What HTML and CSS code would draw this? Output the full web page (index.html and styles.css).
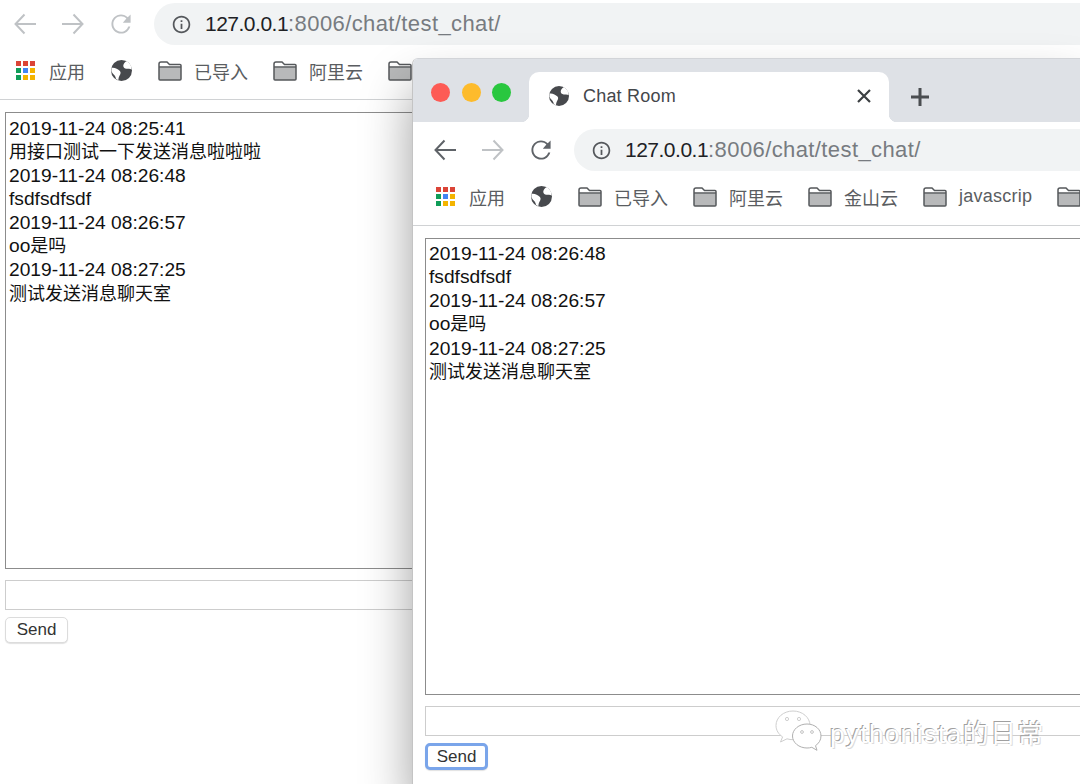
FILE: index.html
```html
<!DOCTYPE html>
<html lang="zh">
<head>
  <meta charset="UTF-8">
  <meta name="viewport" content="width=device-width, initial-scale=1.0">
  <title>Chat Room</title>
  <link rel="stylesheet" href="styles.css">
</head>
<body>
  <!-- 图标 -->
  <svg class="defs" aria-hidden="true">
    <symbol id="i-back" viewBox="0 0 24 24"><path d="M23 12H2.500M11.500 2.500L2.500 12l9 9.500" fill="none" stroke="currentColor" stroke-width="2"/></symbol>
    <symbol id="i-forward" viewBox="0 0 24 24"><path d="M1 12h20.500M12.500 2.500l9 9.500-9 9.500" fill="none" stroke="currentColor" stroke-width="2"/></symbol>
    <symbol id="i-reload" viewBox="2 2 20 20"><path d="M17.650 6.350C16.200 4.900 14.210 4 12 4c-4.420 0-7.990 3.580-7.990 8s3.570 8 7.990 8c3.730 0 6.840-2.550 7.730-6h-1.700c-.82 2.600-3.200 4.400-6.030 4.400-3.530 0-6.400-2.870-6.400-6.400S8.470 5.600 12 5.600c1.770 0 3.340.74 4.500 1.900L13.500 11H20V4l-2.350 2.350z" fill="currentColor"/></symbol>
    <symbol id="i-info" viewBox="0 0 24 24"><path d="M11 7h2v2h-2zm0 4h2v6h-2zm1-9C6.480 2 2 6.480 2 12s4.480 10 10 10 10-4.480 10-10S17.520 2 12 2zm0 18c-4.410 0-8-3.590-8-8s3.590-8 8-8 8 3.590 8 8-3.590 8-8 8z"/></symbol>
    <symbol id="i-globe" viewBox="0 0 20 20"><circle cx="10" cy="10" r="10" fill="#47494d"/><path d="M.6 7.500C3.500 7 6.500 8.500 8.500 10.500c1.200 1.500.5 3-.3 4.200-.7 1.200-1 2.500-1.200 4.500l-2.200-1C4.500 16 3.800 15 2.800 14 1.500 12.800.7 11.500.3 10.500z" fill="#fff"/><path d="M14.500 1.200c-1.200 1-2.600 2.300-2.800 4-.1 1.700 1.100 3 3 3.200 1.700.2 3.300 0 4.900.6l-.4-3C18.500 4 16.500 2 14.500 1.200z" fill="#fff"/></symbol>
    <symbol id="i-folder" viewBox="0 0 24 20"><path d="M1 3C1 1.900 1.700 1 3 1h6l2.500 2.500H22c.6 0 1 .5 1 1V18c0 .6-.4 1-1 1H2c-.6 0-1-.4-1-1z" fill="#fff"/><path d="M1 6.500h22V18c0 .6-.4 1-1 1H2c-.6 0-1-.4-1-1z" fill="#b8b9ba"/><path d="M1 3C1 1.900 1.700 1 3 1h6l2.500 2.500H22c.6 0 1 .5 1 1V18c0 .6-.4 1-1 1H2c-.6 0-1-.4-1-1zM1 6h22" fill="none" stroke="#55585b" stroke-width="1.500"/></symbol>
    <symbol id="i-apps" viewBox="0 0 21 21">
      <rect x="1" y="1" width="5" height="5" fill="#db4437"/><rect x="8" y="1" width="5" height="5" fill="#db4437"/><rect x="15" y="1" width="5" height="5" fill="#db4437"/>
      <rect x="1" y="8" width="5" height="5" fill="#0f9d58"/><rect x="8" y="8" width="5" height="5" fill="#4285f4"/><rect x="15" y="8" width="5" height="5" fill="#f4b400"/>
      <rect x="1" y="15" width="5" height="5" fill="#0f9d58"/><rect x="8" y="15" width="5" height="5" fill="#f4b400"/><rect x="15" y="15" width="5" height="5" fill="#f4b400"/>
    </symbol>
  </svg>

  <!-- 后面的窗口 -->
  <div class="window back">
    <div class="toolbar">
      <div class="nav">
        <svg class="nav-icon off"><use href="#i-back"/></svg>
        <svg class="nav-icon off"><use href="#i-forward"/></svg>
        <svg class="nav-icon off"><use href="#i-reload"/></svg>
      </div>
      <div class="address">
        <svg class="info"><use href="#i-info"/></svg>
        <span class="url"><b>127.0.0.1</b>:8006/chat/test_chat/</span>
      </div>
    </div>
    <div class="bookmarks">
      <div class="mark"><svg class="apps"><use href="#i-apps"/></svg>应用</div>
      <div class="mark"><svg class="globe"><use href="#i-globe"/></svg></div>
      <div class="mark"><svg class="folder"><use href="#i-folder"/></svg>已导入</div>
      <div class="mark"><svg class="folder"><use href="#i-folder"/></svg>阿里云</div>
      <div class="mark"><svg class="folder"><use href="#i-folder"/></svg>金山云</div>
    </div>
    <div class="chat">
      <div class="log">
        <div>2019-11-24 08:25:41</div>
        <div class="zh">用接口测试一下发送消息啦啦啦</div>
        <div>2019-11-24 08:26:48</div>
        <div>fsdfsdfsdf</div>
        <div>2019-11-24 08:26:57</div>
        <div>oo<span class="zh-inline">是吗</span></div>
        <div>2019-11-24 08:27:25</div>
        <div class="zh">测试发送消息聊天室</div>
      </div>
      <input class="msg" type="text">
      <button class="send">Send</button>
    </div>
  </div>

  <!-- 前面的窗口 -->
  <div class="window front">
    <div class="titlebar">
      <div class="lights">
        <span class="light red"></span>
        <span class="light yellow"></span>
        <span class="light green"></span>
      </div>
      <div class="tab">
        <svg class="globe"><use href="#i-globe"/></svg>
        <span class="tab-title">Chat Room</span>
        <svg class="tab-close" viewBox="0 0 14 14"><path d="M1 1l12 12M13 1L1 13"/></svg>
      </div>
      <svg class="tab-new" viewBox="0 0 20 20"><path d="M10 1v18M1 10h18"/></svg>
    </div>
    <div class="toolbar">
      <div class="nav">
        <svg class="nav-icon"><use href="#i-back"/></svg>
        <svg class="nav-icon off"><use href="#i-forward"/></svg>
        <svg class="nav-icon"><use href="#i-reload"/></svg>
      </div>
      <div class="address">
        <svg class="info"><use href="#i-info"/></svg>
        <span class="url"><b>127.0.0.1</b>:8006/chat/test_chat/</span>
      </div>
    </div>
    <div class="bookmarks">
      <div class="mark"><svg class="apps"><use href="#i-apps"/></svg>应用</div>
      <div class="mark"><svg class="globe"><use href="#i-globe"/></svg></div>
      <div class="mark"><svg class="folder"><use href="#i-folder"/></svg>已导入</div>
      <div class="mark"><svg class="folder"><use href="#i-folder"/></svg>阿里云</div>
      <div class="mark"><svg class="folder"><use href="#i-folder"/></svg>金山云</div>
      <div class="mark"><svg class="folder"><use href="#i-folder"/></svg><span class="latin">javascrip</span></div>
      <div class="mark"><svg class="folder"><use href="#i-folder"/></svg></div>
    </div>
    <div class="chat">
      <div class="log">
        <div>2019-11-24 08:26:48</div>
        <div>fsdfsdfsdf</div>
        <div>2019-11-24 08:26:57</div>
        <div>oo<span class="zh-inline">是吗</span></div>
        <div>2019-11-24 08:27:25</div>
        <div class="zh">测试发送消息聊天室</div>
      </div>
      <input class="msg" type="text">
      <button class="send focused">Send</button>
    </div>
  </div>

  <!-- 水印 -->
  <div class="watermark">
    <svg class="wechat" viewBox="0 0 48 42">
      <path d="M18 1C8.500 1 1 7.500 1 15.500c0 4.700 2.600 8.800 6.600 11.400L5.500 32l6.500-3.200c2 .6 4 .9 6 .9 9.500 0 17-6.400 17-14.200C35 7.500 27.500 1 18 1z" fill="#fff" stroke="#cfcfcf" stroke-width="1"/>
      <path d="M32 14c-8 0-14.500 5.400-14.500 12S24 38 32 38c1.700 0 3.300-.2 4.800-.7l5.200 3-1.500-4.600c3.400-2.300 5.500-5.800 5.500-9.700 0-6.600-6-12-14-12z" fill="#fff" stroke="#b0b0b0" stroke-width="1"/>
      <circle cx="12" cy="9" r="1.600" fill="#fff" stroke="#bbb" stroke-width=".7"/>
      <circle cx="24" cy="9" r="1.600" fill="#fff" stroke="#bbb" stroke-width=".7"/>
      <circle cx="27" cy="22" r="1.400" fill="#fff" stroke="#aaa" stroke-width=".7"/>
      <circle cx="37" cy="22" r="1.400" fill="#fff" stroke="#aaa" stroke-width=".7"/>
    </svg>
    <span class="mark-text">pythonista的日常</span>
  </div>
</body>
</html>
```

FILE: styles.css
```css
* {
  margin: 0;
  padding: 0;
  box-sizing: border-box;
}
html, body {
  width: 100%;
  height: 100%;
  background-color: #fff;
  overflow: hidden;
  position: relative;
  font-family: "Liberation Sans", "Noto Sans CJK SC", sans-serif;
}
.defs {
  position: absolute;
  width: 0;
  height: 0;
}

/* 窗口 */
.window {
  background: #fff;
  overflow: hidden;
}
.back {
  margin: -4px 0 0 -8px;
  height: 788px;
}
.front {
  position: absolute;
  top: 58px;
  left: 412px;
  right: 0;
  bottom: 0;
  border-left: 1px solid #c4c4c4;
  border-top: 1px solid #d2d4d8;
  border-radius: 6px 0 0 0;
  box-shadow: 0 30px 50px rgba(0, 0, 0, 0.38);
}
.front .toolbar,
.front .bookmarks,
.front .chat {
  margin-left: -1px;
}

/* 标题栏 */
.titlebar {
  height: 63px;
  background: #dee1e6;
  display: flex;
  align-items: flex-end;
}
.lights {
  display: flex;
  gap: 11.5px;
  align-self: flex-start;
  margin: 24px 0 0 18px;
}
.light {
  width: 19px;
  height: 19px;
  border-radius: 50%;
}
.red { background: #fd5b55; }
.yellow { background: #fdbb2c; }
.green { background: #29c73f; }
.tab {
  position: relative;
  width: 360px;
  height: 50px;
  margin-left: 18px;
  background: #fff;
  border-radius: 10px 10px 0 0;
  display: flex;
  align-items: center;
  padding: 0 18px 2px 20px;
}
.tab::before,
.tab::after {
  content: "";
  position: absolute;
  bottom: 0;
  width: 8px;
  height: 8px;
}
.tab::before {
  left: -8px;
  background: radial-gradient(circle at 0 0, #dee1e6 8px, #fff 8.5px);
}
.tab::after {
  right: -8px;
  background: radial-gradient(circle at 100% 0, #dee1e6 8px, #fff 8.5px);
}
.tab .globe {
  width: 20px;
  height: 20px;
  margin: 0;
}
.tab-title {
  margin-left: 14px;
  font-size: 18px;
  color: #44474b;
  letter-spacing: 0.2px;
  flex: 1;
}
.tab-close {
  width: 14px;
  height: 14px;
  fill: none;
  stroke: #3c4043;
  stroke-width: 2.2;
}
.tab-new {
  width: 20px;
  height: 20px;
  align-self: center;
  margin: 13px 0 0 21px;
  fill: none;
  stroke: #4a4d51;
  stroke-width: 3;
}

/* 工具栏 */
.toolbar {
  height: 52px;
  padding: 7px 0 3px 21px;
  display: flex;
  align-items: center;
}
.nav {
  display: flex;
  gap: 24px;
}
.nav-icon {
  width: 24px;
  height: 24px;
  color: #5f6368;
}
.nav-icon.off {
  color: #bfc2c5;
}
.address {
  height: 42px;
  flex: 1;
  margin-left: 21px;
  padding-left: 17px;
  background: #f1f3f4;
  border-radius: 21px 0 0 21px;
  display: flex;
  align-items: center;
  gap: 13px;
}
.info {
  width: 21px;
  height: 21px;
  fill: #55585c;
}
.url {
  font-size: 22px;
  letter-spacing: 0.4px;
  color: #777b80;
}
.url b {
  font-size: 21px;
  font-weight: normal;
  letter-spacing: -0.5px;
  color: #202124;
}

/* 书签栏 */
.bookmarks {
  height: 52px;
  padding: 0 0 6px 23px;
  border-bottom: 1px solid #d0d2d4;
  display: flex;
  align-items: center;
  gap: 25px;
  font-size: 18px;
  color: #5a5d61;
  white-space: nowrap;
}
.mark {
  display: flex;
  align-items: center;
  gap: 12px;
}
.latin {
  letter-spacing: 0.25px;
}
.apps {
  width: 21px;
  height: 21px;
  margin-right: 1px;
}
.globe {
  width: 21px;
  height: 21px;
  margin: 0 1px;
}
.folder {
  width: 24px;
  height: 20px;
}

/* 聊天内容 */
.chat {
  padding: 12px 0 0 13px;
}
.log {
  width: 1100px;
  height: 457px;
  padding: 4px 3px;
  border: 1px solid #8c8c8c;
  font-size: 19.2px;
  line-height: 23.4px;
  color: #111;
}
.front .log {
  padding-top: 3px;
}
.zh {
  padding-top: 2px;
  font-size: 18px;
  line-height: 21.4px;
}
.zh-inline {
  font-size: 18px;
}
.msg {
  display: block;
  width: 1100px;
  height: 30px;
  margin-top: 11px;
  border: 1px solid #cdcdcd;
  background: #fff;
}
.send {
  display: block;
  width: 63px;
  height: 26px;
  margin-top: 7px;
  background: #fff;
  border: 1px solid #dcdcdc;
  border-radius: 5px;
  box-shadow: 0 1px 1px rgba(0, 0, 0, 0.12);
  font-family: inherit;
  font-size: 17px;
  color: #333;
}
.send.focused {
  height: 27px;
  border: 3px solid #7aa5ea;
}

/* 水印 */
.watermark {
  position: absolute;
  top: 710px;
  left: 775px;
  display: flex;
  align-items: center;
  gap: 7px;
}
.wechat {
  width: 48px;
  height: 42px;
}
.mark-text {
  font-size: 26px;
  letter-spacing: 1.4px;
  color: #fff;
  text-shadow: -1px -1px 0 #a0a0a0, 1px 1px 0 #dcdcdc;
}
```
